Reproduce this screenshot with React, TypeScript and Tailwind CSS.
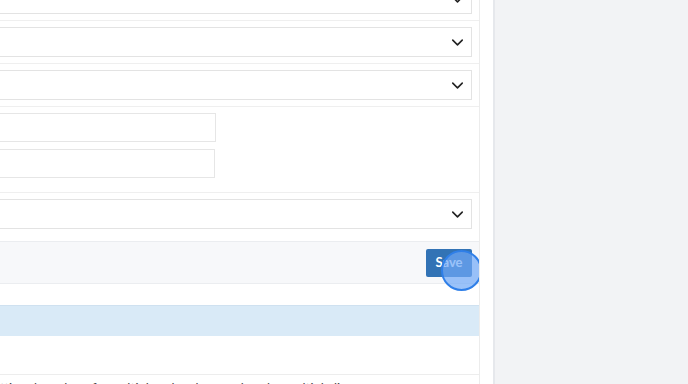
import { ChevronDown } from "lucide-react";

function SelectBox() {
    return (
        <div className="h-[30px] bg-white border border-[#e3e3e3] flex items-center justify-end pr-[4px]">
            <ChevronDown className="w-[19px] h-[19px] text-[#222]" strokeWidth={2} />
        </div>
    );
}

function SelectRow({ first = false }: { first?: boolean }) {
    return (
        <div
            className={`px-[7px] pt-[6px] pb-[6px] ${first ? "-mt-[22px]" : "border-t border-[#efefef]"}`}
        >
            <SelectBox />
        </div>
    );
}

export default function App() {
    return (
        <div className="flex h-[384px] w-[688px] overflow-hidden bg-white font-['Lato','Open_Sans',sans-serif]">
            <div className="w-[480px] shrink-0 border-r border-[#ececec] overflow-hidden">
                <div className="-ml-[24px] flex flex-col">
                    <SelectRow first />
                    <SelectRow />
                    <SelectRow />

                    <div className="border-t border-[#efefef] pl-[7px] pt-[6px] pb-[14px] flex flex-col gap-[7px]">
                        <div className="w-[233px] h-[29px] border border-[#e6e6e6] bg-white" />
                        <div className="w-[232px] h-[29px] border border-[#e6e6e6] bg-white" />
                    </div>

                    <div className="border-t border-[#efefef] px-[7px] pt-[6px] pb-[12px]">
                        <SelectBox />
                    </div>

                    <div className="h-[43px] bg-[#f7f8fa] border-t border-b border-[#ebedf0] flex items-center justify-end pr-[7px]">
                        <div className="relative">
                            <button className="h-[28px] w-[46px] bg-[#3273b5] text-white text-[13px] font-bold rounded-[2px]">
                                Save
                            </button>
                            <div className="absolute left-[15px] top-[1px] w-[41px] h-[41px] rounded-full bg-[#6fa8f7]/70 border-2 border-[#2f7fe8] pointer-events-none" />
                        </div>
                    </div>

                    <div className="h-[21px]" />
                    <div className="h-[31px] bg-[#d9eaf7] border-t border-[#cfe1f0]" />
                    <div className="h-[38px]" />
                    <div className="border-t border-[#ededed] pt-[4px] pl-[24px] text-[13px] leading-[18px] text-[#444] whitespace-nowrap">
                        tting the value of a multiple select box so that the multiple list
                    </div>
                </div>
            </div>
            <div className="w-[13px] shrink-0 bg-white" />
            <div className="flex-1 bg-[#f2f3f5] border-l-2 border-[#e6e8ec]" />
        </div>
    );
}
